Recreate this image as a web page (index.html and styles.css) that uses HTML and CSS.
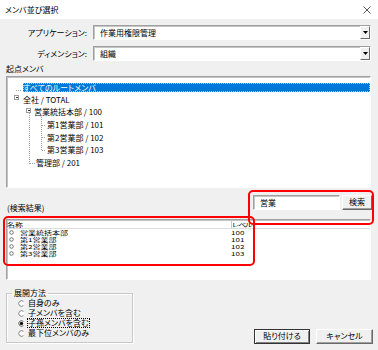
FILE: index.html
```html
<!DOCTYPE html>
<html lang="ja">
<head>
<meta charset="utf-8">
<title>メンバ並び選択</title>
<link rel="stylesheet" href="styles.css">
</head>
<body>
<div class="win">
  <div class="titlebar">
    <span class="title">メンバ並び選択</span>
    <svg class="close" width="8" height="8" viewBox="0 0 8 8"><path d="M0.5 0.5L7.5 7.5M7.5 0.5L0.5 7.5" stroke="#444" stroke-width="0.9" fill="none"/></svg>
  </div>
  <div class="main">
    <div class="field">
      <span class="lbl">アプリケーション:</span>
      <div class="combo"><span class="val">作業用権限管理</span><span class="drop"><svg width="5" height="3" viewBox="0 0 5 3"><path d="M0 0H5L2.5 3Z" fill="#000"/></svg></span></div>
    </div>
    <div class="field">
      <span class="lbl">ディメンション:</span>
      <div class="combo"><span class="val">組織</span><span class="drop"><svg width="5" height="3" viewBox="0 0 5 3"><path d="M0 0H5L2.5 3Z" fill="#000"/></svg></span></div>
    </div>
    <div class="cap">起点メンバ</div>
    <div class="tree">
      <svg class="tree-lines" width="364" height="110" viewBox="0 0 364 110">
        <g stroke="#a0a0a0" stroke-width="1" stroke-dasharray="1 1" fill="none" shape-rendering="crispEdges">
          <path d="M8.5 13.5H15"/>
          <path d="M22.5 35.5V87M22.5 86.5H28"/>
          <path d="M34.5 38V73.5M34.5 48.5H39M34.5 60.5H39M34.5 73.5H39"/>
        </g>
        <g shape-rendering="crispEdges">
          <rect x="7.5" y="18.5" width="4" height="4" fill="#fff" stroke="#9a9a9a"/>
          <path d="M8.5 20.5H10.5" stroke="#333"/>
          <rect x="19.5" y="31.5" width="4" height="4" fill="#fff" stroke="#9a9a9a"/>
          <path d="M20.5 33.5H22.5" stroke="#333"/>
        </g>
      </svg>
      <div class="node sel l0"><span class="t">すべてのルートメンバ</span></div>
      <div class="node l0">全社 / TOTAL</div>
      <div class="node l1">営業統括本部 / 100</div>
      <div class="node l2">第1営業部 / 101</div>
      <div class="node l2">第2営業部 / 102</div>
      <div class="node l2">第3営業部 / 103</div>
      <div class="node l1b">管理部 / 201</div>
    </div>
    <div class="searchrow">
      <span class="cap2">(検索結果)</span>
      <div class="search">
        <div class="input">営業</div>
        <div class="btn">検索</div>
      </div>
    </div>
    <div class="list">
      <div class="lhead"><span class="h1"><span class="sq">名称</span></span><span class="h2"><span class="sq tight">レベル</span></span></div>
      <div class="lrow"><span class="name"><svg class="dot" width="5" height="5" viewBox="0 0 5 5"><circle cx="2.5" cy="2.5" r="1.8" fill="#fff" stroke="#555" stroke-width="0.8"/></svg><span class="sq">営業統括本部</span></span><span class="lv"><span class="sq">100</span></span></div>
      <div class="lrow"><span class="name"><svg class="dot" width="5" height="5" viewBox="0 0 5 5"><circle cx="2.5" cy="2.5" r="1.8" fill="#fff" stroke="#555" stroke-width="0.8"/></svg><span class="sq">第1営業部</span></span><span class="lv"><span class="sq">101</span></span></div>
      <div class="lrow"><span class="name"><svg class="dot" width="5" height="5" viewBox="0 0 5 5"><circle cx="2.5" cy="2.5" r="1.8" fill="#fff" stroke="#555" stroke-width="0.8"/></svg><span class="sq">第2営業部</span></span><span class="lv"><span class="sq">102</span></span></div>
      <div class="lrow"><span class="name"><svg class="dot" width="5" height="5" viewBox="0 0 5 5"><circle cx="2.5" cy="2.5" r="1.8" fill="#fff" stroke="#555" stroke-width="0.8"/></svg><span class="sq">第3営業部</span></span><span class="lv"><span class="sq">103</span></span></div>
    </div>
    <div class="bottom">
      <fieldset class="group">
        <legend>展開方法</legend>
        <div class="radios">
          <div class="radio"><svg width="7" height="7" viewBox="0 0 7 7"><circle cx="3.5" cy="3.5" r="2.8" fill="#fff"/><path d="M5.4 1.4A2.8 2.8 0 1 0 5.4 5.6" stroke="#777" stroke-width="0.9" fill="none"/></svg><span>自身のみ</span></div>
          <div class="radio"><svg width="7" height="7" viewBox="0 0 7 7"><circle cx="3.5" cy="3.5" r="2.8" fill="#fff"/><path d="M5.4 1.4A2.8 2.8 0 1 0 5.4 5.6" stroke="#777" stroke-width="0.9" fill="none"/></svg><span>子メンバを含む</span></div>
          <div class="radio on"><svg width="7" height="7" viewBox="0 0 7 7"><circle cx="3.5" cy="3.5" r="2.8" fill="#fff"/><path d="M5.4 1.4A2.8 2.8 0 1 0 5.4 5.6" stroke="#555" stroke-width="0.9" fill="none"/><circle cx="3.5" cy="3.5" r="1.7" fill="#111"/></svg><span class="focus">子孫メンバを含む</span></div>
          <div class="radio"><svg width="7" height="7" viewBox="0 0 7 7"><circle cx="3.5" cy="3.5" r="2.8" fill="#fff"/><path d="M5.4 1.4A2.8 2.8 0 1 0 5.4 5.6" stroke="#777" stroke-width="0.9" fill="none"/></svg><span>最下位メンバのみ</span></div>
        </div>
      </fieldset>
      <div class="btns">
        <div class="pbtn def">貼り付ける</div>
        <div class="pbtn">キャンセル</div>
      </div>
    </div>
  </div>
  <div class="mark mark-search"></div>
  <div class="mark mark-list"></div>
</div>
</body>
</html>
```

FILE: styles.css
```css
* { box-sizing: border-box; }
html, body { margin: 0; padding: 0; }
body {
  width: 378px;
  height: 350px;
  overflow: hidden;
  background: #f0f0f0;
  font-family: "Noto Sans CJK JP", "Noto Sans", sans-serif;
  font-size: 8px;
  color: #000;
  font-feature-settings: "palt";
}
.win { position: relative; width: 378px; height: 350px; }

.titlebar {
  height: 19px;
  background: #fff;
  display: flex;
  align-items: center;
  justify-content: space-between;
  padding: 0 7px 0 5px;
}
.title { font-size: 8px; line-height: 10px; }
.close { display: block; }

.main { padding: 0 7px 0 6px; }

.field { display: flex; align-items: center; height: 15px; margin-top: 6px; }
.lbl { width: 81px; margin-right: 6px; text-align: right; line-height: 15px; white-space: nowrap; }
.combo {
  flex: 1;
  height: 15px;
  display: flex;
  background: #fff;
  border: 1px solid;
  border-color: #a0a0a0 #fff #fff #a0a0a0;
  box-shadow: inset 1px 1px 0 #c4c4c4;
}
.combo .val { flex: 1; padding-left: 6px; line-height: 13px; }
.drop {
  width: 10px;
  height: 13px;
  display: flex;
  align-items: center;
  justify-content: center;
  background: #f0f0f0;
  border: 1px solid;
  border-color: #fff #696969 #696969 #fff;
}
.drop svg { display: block; }

.cap { height: 15px; line-height: 15px; }

.tree {
  position: relative;
  height: 112px;
  background: #fff;
  border: 1px solid;
  border-color: #a0a0a0 #fff #fff #a0a0a0;
  box-shadow: inset 1px 1px 0 #c4c4c4;
  padding-top: 4px;
}
.tree-lines { position: absolute; left: 0; top: 0; }
.node { position: relative; height: 12.6px; display: flex; align-items: center; white-space: nowrap; line-height: 10px; }
.l0 { padding-left: 16px; }
.l1 { padding-left: 27px; }
.l1b { padding-left: 29px; }
.l2 { padding-left: 40px; }
.sel .t {
  flex: 1;
  height: 9px;
  line-height: 9px;
  background: #0078d7;
  color: #fff;
  outline: 1px dotted #9fcdf3;
  outline-offset: -1px;
}

.searchrow { display: flex; justify-content: space-between; align-items: flex-start; height: 24px; margin-top: 7px; }
.cap2 { margin-top: 7px; line-height: 12px; padding-left: 1px; }
.search { display: flex; gap: 2px; height: 15px; margin-right: -1px; }
.input {
  width: 87px;
  height: 15px;
  background: #fff;
  border: 1px solid;
  border-color: #a0a0a0 #fff #fff #a0a0a0;
  box-shadow: inset 1px 1px 0 #c4c4c4;
  padding-left: 6px;
  line-height: 13px;
}
.btn {
  width: 30px;
  height: 15px;
  text-align: center;
  line-height: 12px;
  background: #f0f0f0;
  border: 1px solid;
  border-color: #fff #696969 #696969 #fff;
  box-shadow: inset 0 -1px 0 #a0a0a0;
}

.list {
  height: 61px;
  background: #fff;
  border: 1px solid;
  border-color: #a0a0a0 #fff #fff #a0a0a0;
  box-shadow: inset 1px 1px 0 #c4c4c4;
}
.lhead {
  display: grid;
  grid-template-columns: 224px 1fr;
  height: 9px;
  border-bottom: 1px solid #dcdcdc;
  align-items: center;
}
.h1, .h2 { height: 8px; display: flex; align-items: center; }
.h2 { border-left: 1px solid #c8c8c8; padding-left: 0; }
.sq { display: inline-block; line-height: 7px; transform: scaleY(0.68); transform-origin: 50% 50%; white-space: nowrap; }
.tight { letter-spacing: -1px; }
.lrow { display: grid; grid-template-columns: 224px 1fr; height: 7px; line-height: 7px; align-items: center; }
.name { display: flex; align-items: center; padding-left: 2px; }
.dot { display: block; margin-right: 6px; }
.lv { display: flex; align-items: center; }

.bottom { display: flex; justify-content: space-between; align-items: flex-start; height: 70px; }
.group {
  margin: 8px 0 0 0;
  width: 127px;
  height: 55px;
  padding: 0 0 4px 0;
  border: 1px solid #c8c8c8;
  box-shadow: inset 1px 1px 0 #fff, 1px 1px 0 #fff;
  min-inline-size: 0;
}
.group legend { margin-left: 5px; padding: 0 2px; line-height: 10px; }
.radios { padding-left: 11px; }
.radio { display: flex; align-items: center; height: 10px; white-space: nowrap; }
.radio svg { display: block; margin-right: 3px; }
.radio span { line-height: 8px; }
.focus { outline: 1px dotted #000; outline-offset: 0; }

.btns { display: flex; gap: 6px; margin-top: 49px; margin-right: -2px; }
.pbtn {
  height: 15px;
  text-align: center;
  line-height: 12px;
  background: #f0f0f0;
  width: 57px;
  border: 1px solid;
  border-color: #fff #696969 #696969 #fff;
  box-shadow: inset -1px -1px 0 #a0a0a0;
}
.pbtn.def {
  width: 56px;
  border-color: #333;
  box-shadow: inset 1px 1px 0 #fff, inset -1px -1px 0 #808080;
}

.mark { position: absolute; border: 2px solid #f00; border-radius: 5px; }
.mark-search { left: 248px; top: 190px; width: 126px; height: 35px; }
.mark-list { left: 3px; top: 216px; width: 252px; height: 50px; }
```
